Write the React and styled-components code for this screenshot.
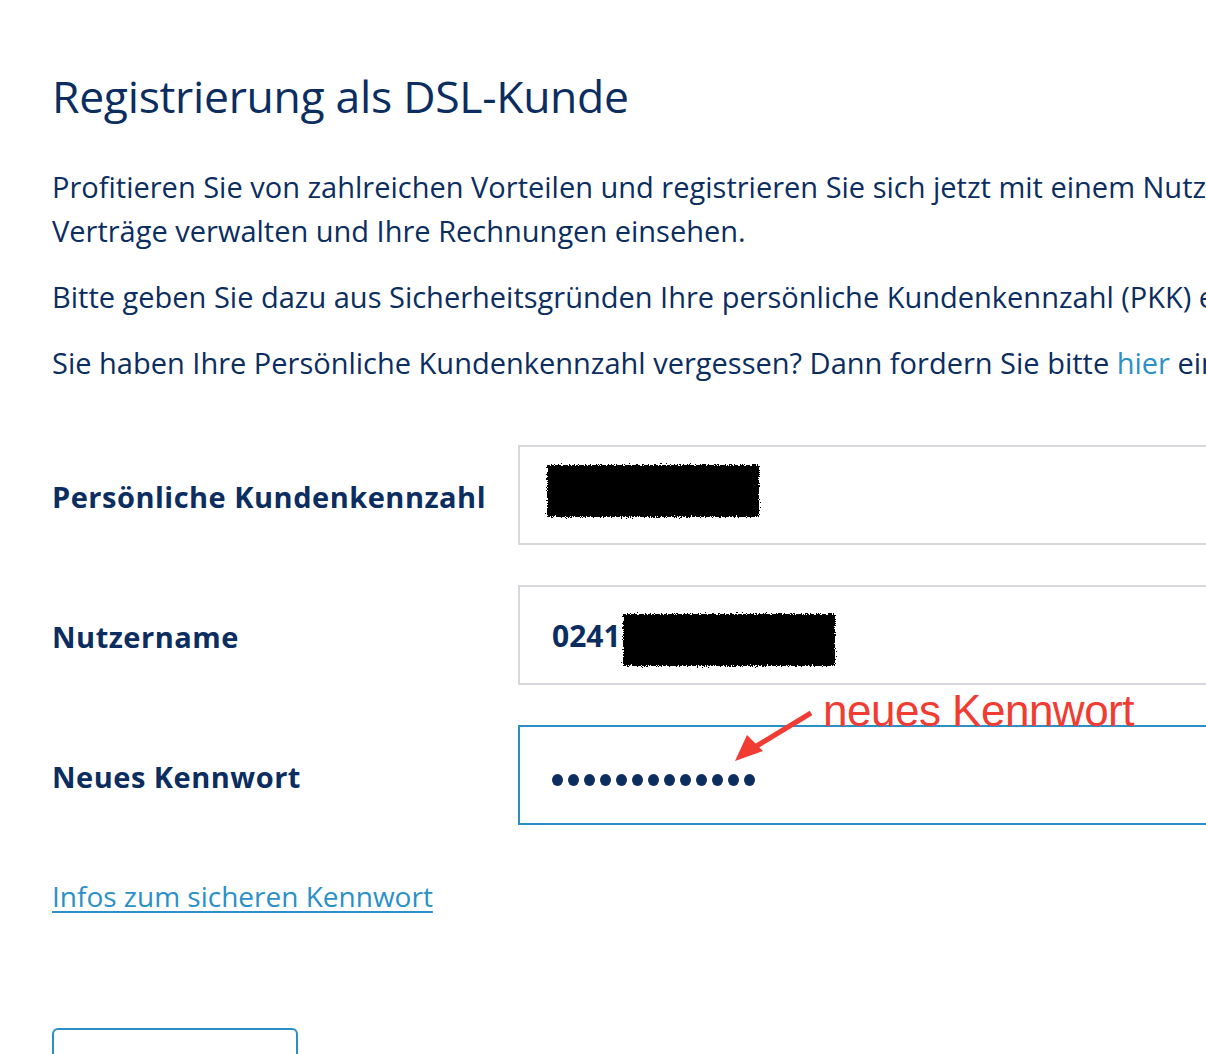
import React from "react";
import styled, { createGlobalStyle } from "styled-components";

const GlobalStyle = createGlobalStyle`
  html, body {
    margin: 0;
    padding: 0;
    background: #ffffff;
    overflow: hidden;
  }
  body {
    font-family: "Open Sans", "Noto Sans", sans-serif;
    color: #0b2d5f;
  }
`;

const Page = styled.div`
  width: 1500px;
  padding: 62px 0 0 52px;
  box-sizing: border-box;
`;

const Title = styled.h1`
  margin: 0 0 35px;
  font-size: 44.5px;
  line-height: 68px;
  font-weight: 400;
  letter-spacing: -0.3px;
`;

const Text = styled.p`
  margin: 0 0 22px;
  font-size: 29px;
  line-height: 44px;
  white-space: nowrap;
`;

const InlineLink = styled.a`
  color: #2b90c8;
  text-decoration: none;
`;

const Form = styled.div`
  margin-top: 60px;
  display: flex;
  flex-direction: column;
  gap: 40px;
`;

const Row = styled.div`
  position: relative;
  display: grid;
  grid-template-columns: 466px 1fr;
  align-items: center;
`;

const Label = styled.label`
  font-size: 29px;
  font-weight: 700;
  letter-spacing: 0.5px;
  padding-top: 2px;
`;

const Field = styled.div`
  position: relative;
  height: 100px;
  box-sizing: border-box;
  border: 2px solid ${(p) => (p.$active ? "#2b8fc7" : "#d6d8db")};
  display: flex;
  align-items: center;
  padding-left: 32px;
`;

const Value = styled.span`
  font-size: 30px;
  font-weight: 700;
`;

const Dots = styled.div`
  display: flex;
  gap: 5px;
  margin-top: 9px;
`;

const Dot = styled.span`
  width: 11px;
  height: 12px;
  border-radius: 50%;
  background: #0b2d5f;
`;

const Redaction = styled.svg`
  position: absolute;
  left: ${(p) => p.$left}px;
  top: ${(p) => p.$top}px;
`;

const Note = styled.div`
  position: absolute;
  left: 303px;
  top: -40px;
  font-family: "Liberation Sans", Arial, sans-serif;
  font-size: 44px;
  line-height: 48px;
  color: #f03c32;
  letter-spacing: -0.5px;
  white-space: nowrap;
`;

const Arrow = styled.svg`
  position: absolute;
  left: 205px;
  top: -16px;
  overflow: visible;
`;

const InfoLink = styled.a`
  display: inline-block;
  margin-top: 52px;
  font-size: 28px;
  color: #2b90c8;
  text-decoration: underline;
  text-underline-offset: 4px;
  text-decoration-thickness: 1.5px;
`;

const Button = styled.button`
  display: block;
  margin-top: 113px;
  width: 246px;
  height: 60px;
  border: 2px solid #2b8fc7;
  border-radius: 6px;
  background: #fff;
`;

function Blob({ left, top, width, height, id }) {
  return (
    <Redaction $left={left} $top={top} width={width} height={height}>
      <defs>
        <filter id={id} x="-5%" y="-10%" width="110%" height="120%">
          <feTurbulence type="fractalNoise" baseFrequency="0.8" numOctaves="2" seed="3" />
          <feDisplacementMap in="SourceGraphic" scale="6" />
        </filter>
      </defs>
      <rect x="3" y="3" width={width - 6} height={height - 6} fill="#000" filter={`url(#${id})`} />
    </Redaction>
  );
}

export default function App() {
  return (
    <>
      <GlobalStyle />
      <Page>
        <Title>Registrierung als DSL-Kunde</Title>
        <Text>
          Profitieren Sie von zahlreichen Vorteilen und registrieren Sie sich jetzt mit einem Nutzernamen. So können Sie Ihre
          <br />
          Verträge verwalten und Ihre Rechnungen einsehen.
        </Text>
        <Text>
          Bitte geben Sie dazu aus Sicherheitsgründen Ihre persönliche Kundenkennzahl (PKK) ein.
        </Text>
        <Text>
          Sie haben Ihre Persönliche Kundenkennzahl vergessen? Dann fordern Sie bitte <InlineLink href="#">hier</InlineLink> eine neue an.
        </Text>

        <Form>
          <Row>
            <Label>Persönliche Kundenkennzahl</Label>
            <Field>
              <Blob id="b1" left={24} top={15} width={218} height={58} />
            </Field>
          </Row>
          <Row>
            <Label>Nutzername</Label>
            <Field>
              <Value>0241</Value>
              <Blob id="b2" left={100} top={24} width={218} height={58} />
            </Field>
          </Row>
          <Row>
            <Label>Neues Kennwort</Label>
            <Field $active>
              <Dots>
                {Array.from({ length: 13 }).map((_, i) => (
                  <Dot key={i} />
                ))}
              </Dots>
              <Note>neues Kennwort</Note>
              <Arrow width="80" height="56">
                <line x1="86" y1="2" x2="30" y2="36" stroke="#f03c32" strokeWidth="5" />
                <polygon points="10,50 22,24 38,40" fill="#f03c32" />
              </Arrow>
            </Field>
          </Row>
        </Form>

        <InfoLink href="#">Infos zum sicheren Kennwort</InfoLink>
        <Button />
      </Page>
    </>
  );
}
